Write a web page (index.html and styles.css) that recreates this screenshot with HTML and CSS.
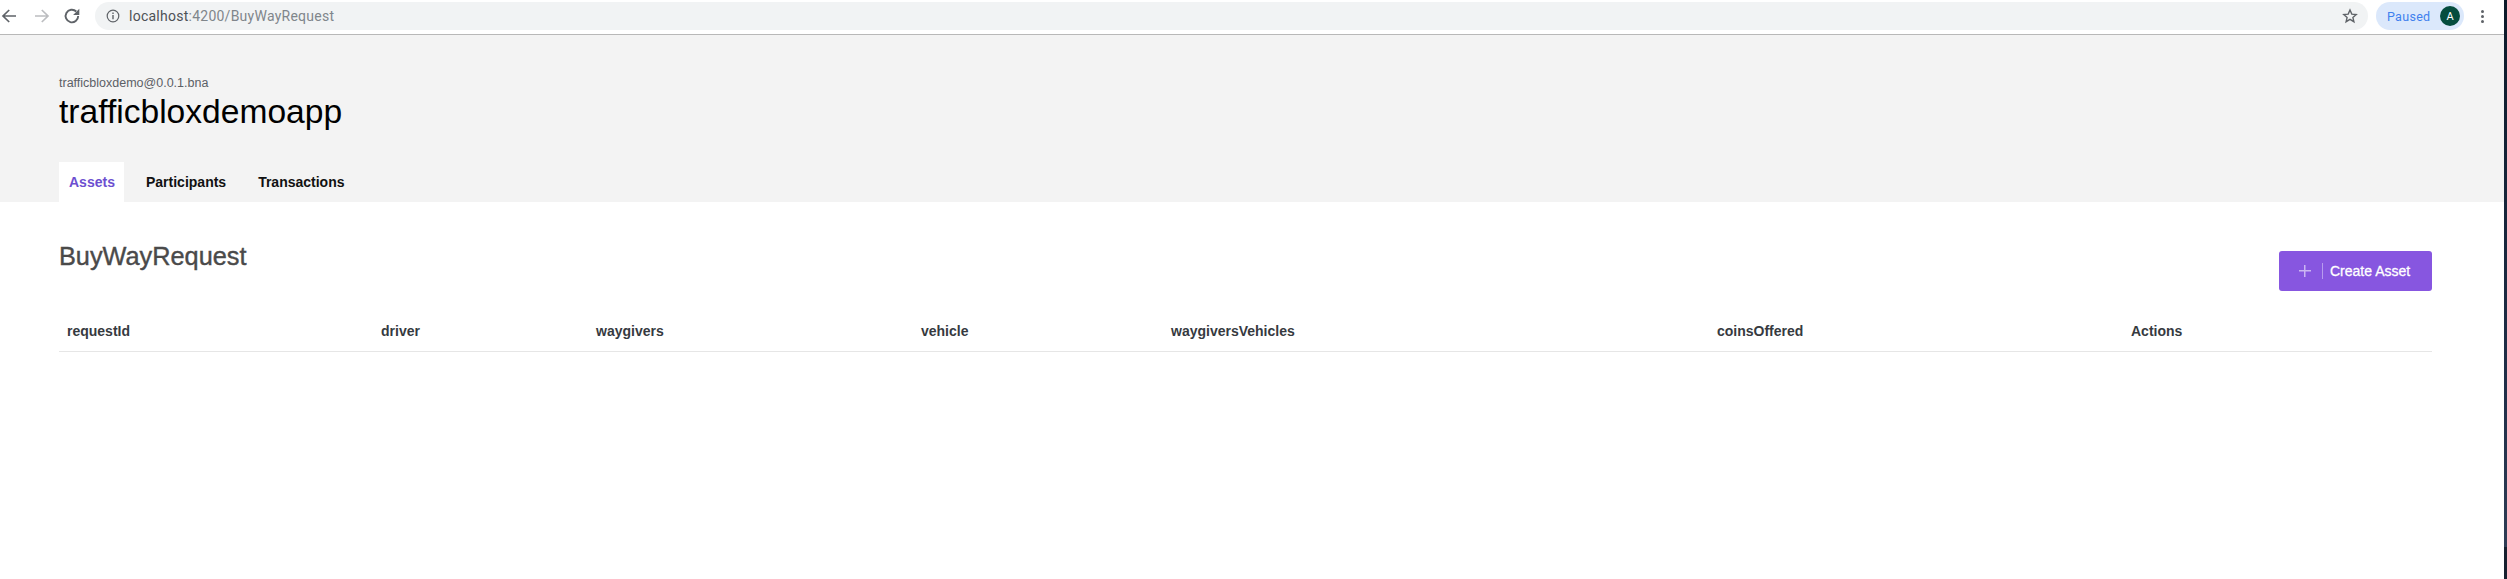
FILE: index.html
```html
<!DOCTYPE html>
<html lang="en">
<head>
<meta charset="utf-8">
<title>BuyWayRequest</title>
<link rel="stylesheet" href="styles.css">
</head>
<body>
<div class="window">
  <div class="page">
    <div class="toolbar">
      <svg class="nav-icon back" viewBox="0 0 16 16"><path d="M15 8H2.500M8.200 2 2 8l6.200 6" fill="none" stroke="#5f6368" stroke-width="1.700"/></svg>
      <svg class="nav-icon forward" viewBox="0 0 16 16"><path d="M1 8h12.500M7.800 2 14 8l-6.200 6" fill="none" stroke="#bcbdc0" stroke-width="1.700"/></svg>
      <svg class="nav-icon reload" viewBox="0 0 16 16"><path d="M13.500 8A5.600 5.600 0 1 1 11.800 4" fill="none" stroke="#5f6368" stroke-width="1.700"/><path d="M14.500 1.500V7H9z" fill="#5f6368"/></svg>
      <div class="omnibox">
        <svg class="info" viewBox="0 0 14 14"><circle cx="7" cy="7" r="5.800" fill="none" stroke="#5f6368" stroke-width="1.200"/><path d="M6.300 6h1.400v4.300H6.300zM6.300 3.500h1.400v1.400H6.300z" fill="#5f6368"/></svg>
        <span class="url"><span class="host">localhost</span>:4200/BuyWayRequest</span>
        <svg class="star" viewBox="0 0 16 16"><path d="M8 2l1.800 4.100 4.400.4-3.300 2.900 1 4.300L8 11.400l-3.900 2.300 1-4.300-3.300-2.900 4.400-.4z" fill="none" stroke="#5f6368" stroke-width="1.400"/></svg>
      </div>
      <div class="paused"><span class="paused-label">Paused</span><span class="avatar">A</span></div>
      <div class="menu"><i></i><i></i><i></i></div>
    </div>
    <header class="app-header">
      <div class="network">trafficbloxdemo@0.0.1.bna</div>
      <h1 class="app-title">trafficbloxdemoapp</h1>
      <nav class="tabs">
        <a class="tab active">Assets</a>
        <a class="tab">Participants</a>
        <a class="tab">Transactions</a>
      </nav>
    </header>
    <main class="content">
      <div class="title-row">
        <h2 class="asset-title">BuyWayRequest</h2>
        <button class="create"><span class="plus"></span><span class="divider"></span><span>Create Asset</span></button>
      </div>
      <div class="table-head">
        <div>requestId</div>
        <div>driver</div>
        <div>waygivers</div>
        <div>vehicle</div>
        <div>waygiversVehicles</div>
        <div>coinsOffered</div>
        <div>Actions</div>
      </div>
    </main>
  </div>
  <div class="edge"></div>
</div>
</body>
</html>
```
FILE: styles.css
```css
* { box-sizing: border-box; }
html, body { margin: 0; height: 579px; background: #fff; overflow: hidden; }
body { font-family: "Liberation Sans", Arial, sans-serif; }
.window { display: flex; height: 579px; overflow: hidden; }
.page { flex: 1; min-width: 0; display: flex; flex-direction: column; }
.edge { width: 3px; background: linear-gradient(#0c1a2a 0, #22304a 400px, #2f3d55 547px, #17202f 547px); }

.toolbar { height: 35px; flex: none; display: flex; align-items: center; border-bottom: 1px solid #b8b8b8; padding: 0 0 2px 0; background: #fff; }
.nav-icon { width: 16px; height: 16px; flex: none; }
.back { margin-left: 1px; }
.forward { margin-left: 17px; }
.reload { width: 18px; height: 18px; margin-left: 13px; }
.omnibox { margin-left: 14px; flex: 1; height: 28px; border-radius: 14px; background: #f1f3f4; display: flex; align-items: center; padding: 0 10px 0 11px; }
.info { width: 14px; height: 14px; flex: none; }
.url { margin-left: 9px; font-size: 14px; color: #80868b; flex: 1; font-family: "Roboto", "Liberation Sans", sans-serif; letter-spacing: .25px; }
.host { color: #4d5156; }
.star { width: 16px; height: 16px; flex: none; }
.paused { margin-left: 8px; width: 88px; height: 28px; flex: none; border-radius: 14px; background: #dbe8fb; display: flex; align-items: center; justify-content: space-between; padding: 0 4px 0 11px; }
.paused-label { font-size: 12.500px; color: #3f80ee; font-family: "Roboto", "Liberation Sans", sans-serif; letter-spacing: .3px; }
.avatar { width: 20px; height: 20px; border-radius: 50%; background: #054d3e; color: #fff; font-size: 11px; display: flex; align-items: center; justify-content: center; font-family: "Roboto", sans-serif; }
.menu { width: 36px; margin-right: 4px; flex: none; display: flex; flex-direction: column; align-items: center; gap: 2px; }
.menu i { width: 3px; height: 3px; border-radius: 50%; background: #5f6368; }

.app-header { height: 167px; flex: none; background: #f3f3f3; padding: 41px 0 0 59px; display: flex; flex-direction: column; }
.network { font-size: 12.500px; line-height: 15px; color: #5b6066; }
.app-title { margin: 0; padding-top: 2px; font-size: 33.600px; line-height: 38px; font-weight: 400; color: #000; }
.tabs { margin-top: auto; display: flex; height: 40px; }
.tab { padding: 0 10px; margin-right: 12px; font-size: 14px; line-height: 40px; font-weight: 700; color: #111; }
.tab.active { width: 65px; background: #fff; color: #6d4fd0; }

.content { flex: 1; padding: 0 72px 0 59px; }
.title-row { height: 109px; display: flex; justify-content: space-between; align-items: flex-start; padding-top: 41px; }
.asset-title { margin: 0; font-size: 25.300px; line-height: 27px; font-weight: 400; color: #4a4a4a; -webkit-text-stroke: .4px #4a4a4a; }
.create { width: 153px; height: 40px; margin-top: 8px; border: 0; border-radius: 3px; background: #8756e0; color: #fff; display: flex; align-items: center; font: 400 14px "Liberation Sans", Arial, sans-serif; -webkit-text-stroke: .3px #fff; padding: 0 0 0 20px; }
.plus { width: 12px; height: 12px; flex: none; background: linear-gradient(#cbb6f2, #cbb6f2) center/12px 1.500px no-repeat, linear-gradient(#cbb6f2, #cbb6f2) center/1.500px 12px no-repeat; }
.divider { width: 1px; height: 16px; margin: 0 7px 0 11px; background: #b79bee; }
.table-head { display: grid; grid-template-columns: 314px 215px 325px 250px 546px 414px 309px; height: 41px; border-bottom: 1px solid #e6e6e6; font-size: 14px; font-weight: 700; color: #363a3f; line-height: 40px; }
.table-head div { padding-left: 8px; }
```
